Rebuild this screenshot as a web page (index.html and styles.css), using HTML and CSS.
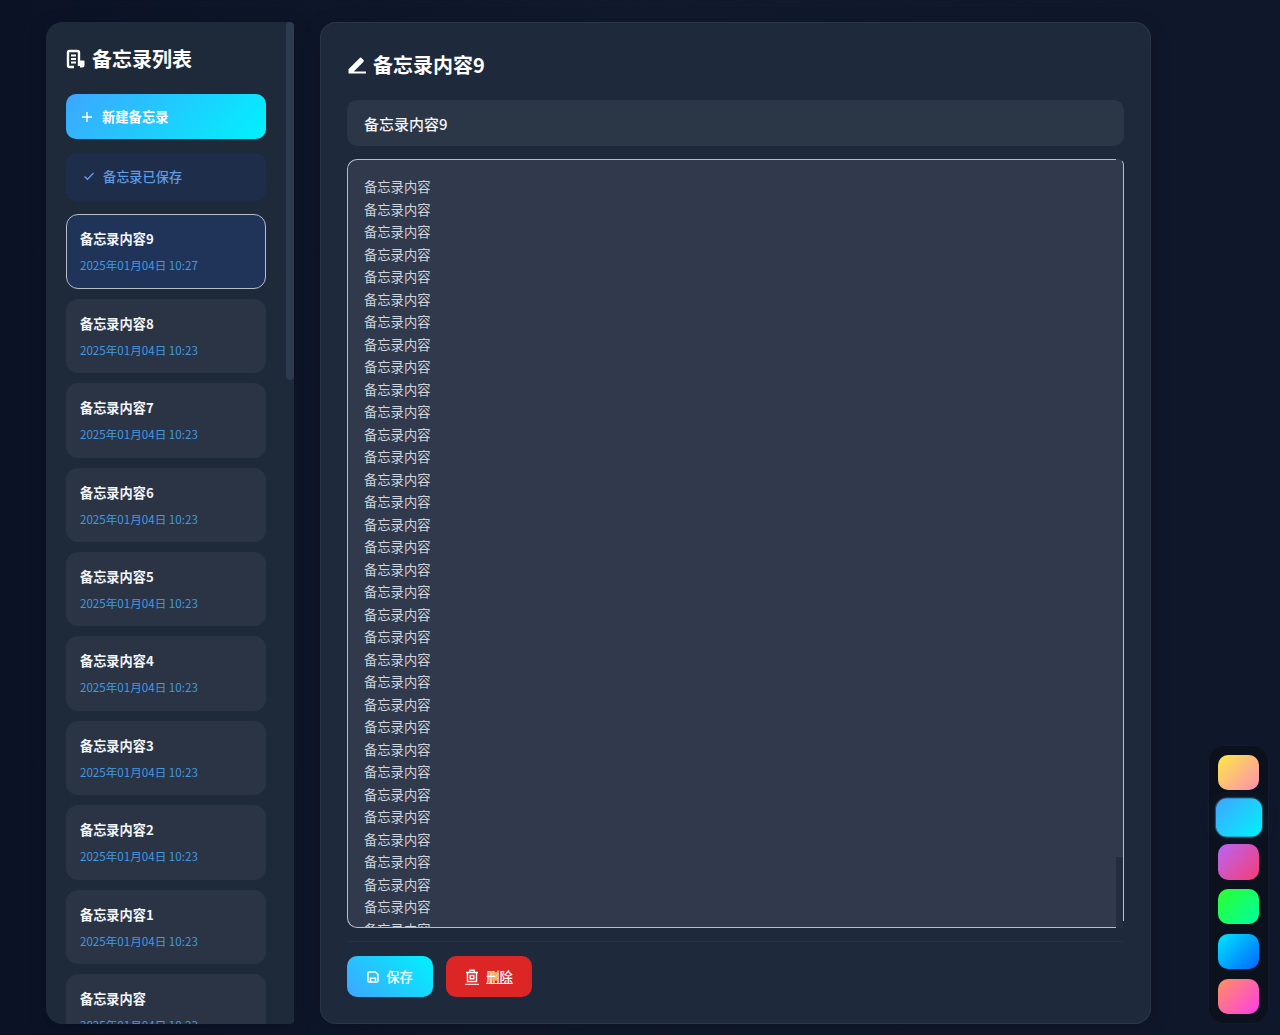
FILE: index.html
```html
<!DOCTYPE html>
<html lang="zh-CN">
<head>
  <meta charset="UTF-8" />
  <title>备忘录</title>
  <link rel="stylesheet" href="styles.css">
</head>
<body>
  <div class="container">

    <!-- Sidebar -->
    <aside class="sidebar">
      <div class="sidebar-scroll">
        <h2 class="sidebar-title">
          <svg class="title-icon" viewBox="0 0 20 20"><path class="doc-line" d="M8 18H3.500a1.500 1.500 0 0 1-1.500-1.500V3.500A1.500 1.500 0 0 1 3.500 2h8A1.500 1.500 0 0 1 13 3.500V17"/><path class="doc-line thin" d="M5 6.500h5M5 10h5M5 13.500h5"/><path class="doc-fold" d="M14 11.500h3.500a1 1 0 0 1 1 1V16a2.500 2.500 0 0 1-2.500 2.500h-2z"/></svg>
          备忘录列表
        </h2>
        <button class="new-btn">
          <svg class="new-icon" viewBox="0 0 12 12"><path d="M6 1v10M1 6h10"/></svg>
          新建备忘录
        </button>
        <div class="notice">
          <svg class="notice-icon" viewBox="0 0 12 12"><path d="M1.500 6.500l3 2.800L10.500 3"/></svg>
          备忘录已保存
        </div>
        <div class="memo active"><div class="memo-title">备忘录内容9</div><div class="memo-date">2025年01月04日 10:27</div></div>
        <div class="memo"><div class="memo-title">备忘录内容8</div><div class="memo-date">2025年01月04日 10:23</div></div>
        <div class="memo"><div class="memo-title">备忘录内容7</div><div class="memo-date">2025年01月04日 10:23</div></div>
        <div class="memo"><div class="memo-title">备忘录内容6</div><div class="memo-date">2025年01月04日 10:23</div></div>
        <div class="memo"><div class="memo-title">备忘录内容5</div><div class="memo-date">2025年01月04日 10:23</div></div>
        <div class="memo"><div class="memo-title">备忘录内容4</div><div class="memo-date">2025年01月04日 10:23</div></div>
        <div class="memo"><div class="memo-title">备忘录内容3</div><div class="memo-date">2025年01月04日 10:23</div></div>
        <div class="memo"><div class="memo-title">备忘录内容2</div><div class="memo-date">2025年01月04日 10:23</div></div>
        <div class="memo"><div class="memo-title">备忘录内容1</div><div class="memo-date">2025年01月04日 10:23</div></div>
        <div class="memo"><div class="memo-title">备忘录内容</div><div class="memo-date">2025年01月04日 10:23</div></div>
      </div>
      <div class="sidebar-bar"><div class="sidebar-thumb"></div></div>
    </aside>

    <!-- Editor -->
    <main class="editor">
      <h2 class="editor-title">
        <svg class="title-icon" viewBox="0 0 20 20"><path d="M1.500 18.500v-4.300L12.500 3.200a1.500 1.500 0 0 1 2.200 0l1.600 1.600a1.500 1.500 0 0 1 0 2.200L6.800 16.400H19v2.100z"/></svg>
        备忘录内容9
      </h2>
      <input class="title-input" type="text" value="备忘录内容9">
      <div class="body-box">
        <textarea class="body-input">备忘录内容
备忘录内容
备忘录内容
备忘录内容
备忘录内容
备忘录内容
备忘录内容
备忘录内容
备忘录内容
备忘录内容
备忘录内容
备忘录内容
备忘录内容
备忘录内容
备忘录内容
备忘录内容
备忘录内容
备忘录内容
备忘录内容
备忘录内容
备忘录内容
备忘录内容
备忘录内容
备忘录内容
备忘录内容
备忘录内容
备忘录内容
备忘录内容
备忘录内容
备忘录内容
备忘录内容
备忘录内容
备忘录内容
备忘录内容
备忘录内容
备忘录内容
备忘录内容</textarea>
        <div class="body-bar">
          <div class="body-thumb"></div>
          <div class="body-track"></div>
          <div class="body-corner"></div>
        </div>
      </div>
      <div class="actions">
        <button class="btn btn-save">
          <svg class="btn-icon" viewBox="0 0 12 12"><path d="M1 2a1 1 0 0 1 1-1h6.500L11 3.500V10a1 1 0 0 1-1 1H2a1 1 0 0 1-1-1z"/><path d="M3.500 11V7.300h5V11"/></svg>
          保存
        </button>
        <a class="btn btn-delete" href="#">
          <svg class="btn-icon trash" viewBox="0 0 14 16"><path d="M1 3.500h12M4.800 3.500V1.200h4.400v2.300M2.500 3.500v9h9v-9M5.200 6.500h3.600v3.200H5.200z"/><path class="trash-line" d="M0 15.300h14"/></svg>
          删除
        </a>
      </div>
    </main>
  </div>

  <!-- Theme switcher -->
  <div class="themes">
    <div class="swatch swatch-sunset"></div>
    <div class="swatch swatch-sky current"></div>
    <div class="swatch swatch-berry"></div>
    <div class="swatch swatch-lime"></div>
    <div class="swatch swatch-ocean"></div>
    <div class="swatch swatch-candy"></div>
  </div>
</body>
</html>
```

FILE: styles.css
```css
* {
  box-sizing: border-box;
}

html, body {
  height: 100%;
}

body {
  margin: 0;
  overflow: hidden;
  font-family: "Noto Sans CJK SC", "Noto Sans", sans-serif;
  color: #f3f4f6;
  background: linear-gradient(90deg, #0b1226 0%, #101a2c 50%, #0f172a 100%);
}

.container {
  display: flex;
  gap: 26px;
  height: 100%;
  padding: 22px 129px 11px 46px;
}

/* Sidebar */
.sidebar {
  display: flex;
  width: 248px;
  flex-shrink: 0;
  overflow: hidden;
  background-color: #1e2939;
  border-radius: 16px 4px 4px 16px;
  box-shadow: 0 4px 20px rgba(0, 0, 0, 0.2);
}

.sidebar-scroll {
  flex: 1;
  min-width: 0;
  padding: 20px;
  overflow: hidden;
}

.sidebar-bar {
  width: 8px;
  flex-shrink: 0;
}

.sidebar-thumb {
  height: 358px;
  background-color: #2d3b50;
  border-radius: 4px;
}

.sidebar-title,
.editor-title {
  display: flex;
  align-items: center;
  gap: 6px;
  margin: 0;
  font-size: 20px;
  font-weight: 700;
  color: #fff;
}

.sidebar-title {
  height: 33px;
  margin-bottom: 19px;
}

.title-icon {
  width: 20px;
  height: 20px;
  fill: #fff;
  flex-shrink: 0;
}

.doc-line {
  fill: none;
  stroke: #fff;
  stroke-width: 2.4;
}

.doc-line.thin {
  stroke-width: 1.800;
}

.new-btn {
  display: flex;
  align-items: center;
  gap: 9px;
  width: 100%;
  height: 45.4px;
  padding: 0 15px;
  border: none;
  border-radius: 10px;
  font: 700 13.3px "Noto Sans CJK SC", sans-serif;
  color: #fff;
  background: linear-gradient(135deg, #3ea6ff 0%, #00f2fe 100%);
}

.new-icon {
  width: 12px;
  height: 12px;
  fill: none;
  stroke: #fff;
  stroke-width: 1.4;
}

.notice {
  display: flex;
  align-items: center;
  gap: 8px;
  height: 48px;
  margin: 14px 0 13px;
  padding: 0 17px 2px;
  border-radius: 10px;
  font-size: 13.2px;
  font-weight: 500;
  color: #5c9be6;
  background-color: #1e2e4a;
}

.notice-icon {
  width: 12px;
  height: 12px;
  fill: none;
  stroke: #5c9be6;
  stroke-width: 1.4;
}

.memo {
  height: 74.4px;
  margin-bottom: 10px;
  padding: 13px 14px;
  border-radius: 12px;
  background-color: #2a3445;
}

.memo.active {
  border: 1px solid #b8bec8;
  padding: 12px 13px;
  background-color: #20345a;
}

.memo-title {
  font-size: 13.2px;
  font-weight: 700;
  line-height: 24px;
  color: #f3f4f6;
}

.memo-date {
  margin-top: 5px;
  font-size: 11.6px;
  line-height: 18px;
  color: #4299e1;
}

/* Editor */
.editor {
  display: flex;
  flex-direction: column;
  flex: 1;
  min-width: 0;
  padding: 27px;
  background-color: #1e293b;
  border-radius: 16px;
  box-shadow: inset 0 0 0 1px #2a3648, 0 4px 20px rgba(0, 0, 0, 0.2);
}

.editor-title {
  height: 31px;
  flex-shrink: 0;
  margin-bottom: 20px;
}

.title-input {
  flex-shrink: 0;
  height: 46px;
  padding: 0 17px;
  border: none;
  border-radius: 10px;
  outline: none;
  font: 500 15px "Noto Sans CJK SC", sans-serif;
  color: #f3f4f6;
  background-color: #2b3647;
}

.body-box {
  display: flex;
  flex: 1;
  min-height: 0;
  margin-top: 13px;
}

.body-input {
  flex: 1;
  min-width: 0;
  padding: 16px 16px 0;
  border: 1px solid #b8bec8;
  border-right: none;
  border-radius: 10px 0 0 10px;
  outline: none;
  resize: none;
  overflow: hidden;
  font: 400 13.3px/22.5px "Noto Sans CJK SC", sans-serif;
  color: #d1d5db;
  background-color: #303a4c;
}

.body-bar {
  display: flex;
  flex-direction: column;
  width: 8px;
  flex-shrink: 0;
}

.body-thumb {
  flex: 1;
  background-color: #303a4c;
  border-right: 1px solid #b8bec8;
  border-top: 1px solid #2a3a55;
  border-radius: 0 6px 0 0;
}

.body-track {
  height: 64px;
  background-color: #222d3e;
  border-right: 1px solid #b8bec8;
}

.body-corner {
  width: 7px;
  height: 7px;
  background-color: #222d3e;
}

.actions {
  display: flex;
  gap: 13px;
  flex-shrink: 0;
  margin-top: 13px;
  padding-top: 14px;
  border-top: 1px solid #273345;
}

.btn {
  display: flex;
  align-items: center;
  justify-content: center;
  gap: 7px;
  width: 86px;
  height: 41px;
  border: none;
  border-radius: 10px;
  font: 500 13.3px "Noto Sans CJK SC", sans-serif;
  color: #fff;
}

.btn-save {
  background: linear-gradient(45deg, #3ea6ff 0%, #00f2fe 100%);
}

.btn-delete {
  background-color: #dc2626;
  text-decoration: underline;
}

.btn-icon {
  width: 12px;
  height: 12px;
  fill: none;
  stroke: #fff;
  stroke-width: 1.500;
}

.btn-icon.trash {
  width: 14px;
  height: 16px;
  stroke-width: 1.400;
  margin-top: 1px;
}

.trash-line {
  stroke-width: 1;
}

/* Theme switcher */
.themes {
  position: fixed;
  right: 10.6px;
  bottom: 11px;
  display: flex;
  flex-direction: column;
  gap: 9.6px;
  padding: 10px;
  border-radius: 16px;
  background-color: #0b111d;
  box-shadow: inset 0 0 0 1px #141c2b;
}

.swatch {
  width: 41.6px;
  height: 35.2px;
  border-radius: 10px;
}

.swatch.current {
  transform: scale(1.1);
  box-shadow: 0 0 0 1px #3a4555, 0 0 16px rgba(62, 166, 255, 0.1);
}

.swatch-sunset { background: linear-gradient(135deg, #fbe945 0%, #ff8fb0 100%); }
.swatch-sky { background: linear-gradient(135deg, #3ea6ff 0%, #00f2fe 100%); }
.swatch-berry { background: linear-gradient(135deg, #b866f5 0%, #f53d72 100%); }
.swatch-lime { background: linear-gradient(135deg, #2cff2c 0%, #00ffa0 100%); }
.swatch-ocean { background: linear-gradient(135deg, #00e5ff 0%, #0066ff 100%); }
.swatch-candy { background: linear-gradient(135deg, #ff9060 0%, #ff3de8 100%); }
```
